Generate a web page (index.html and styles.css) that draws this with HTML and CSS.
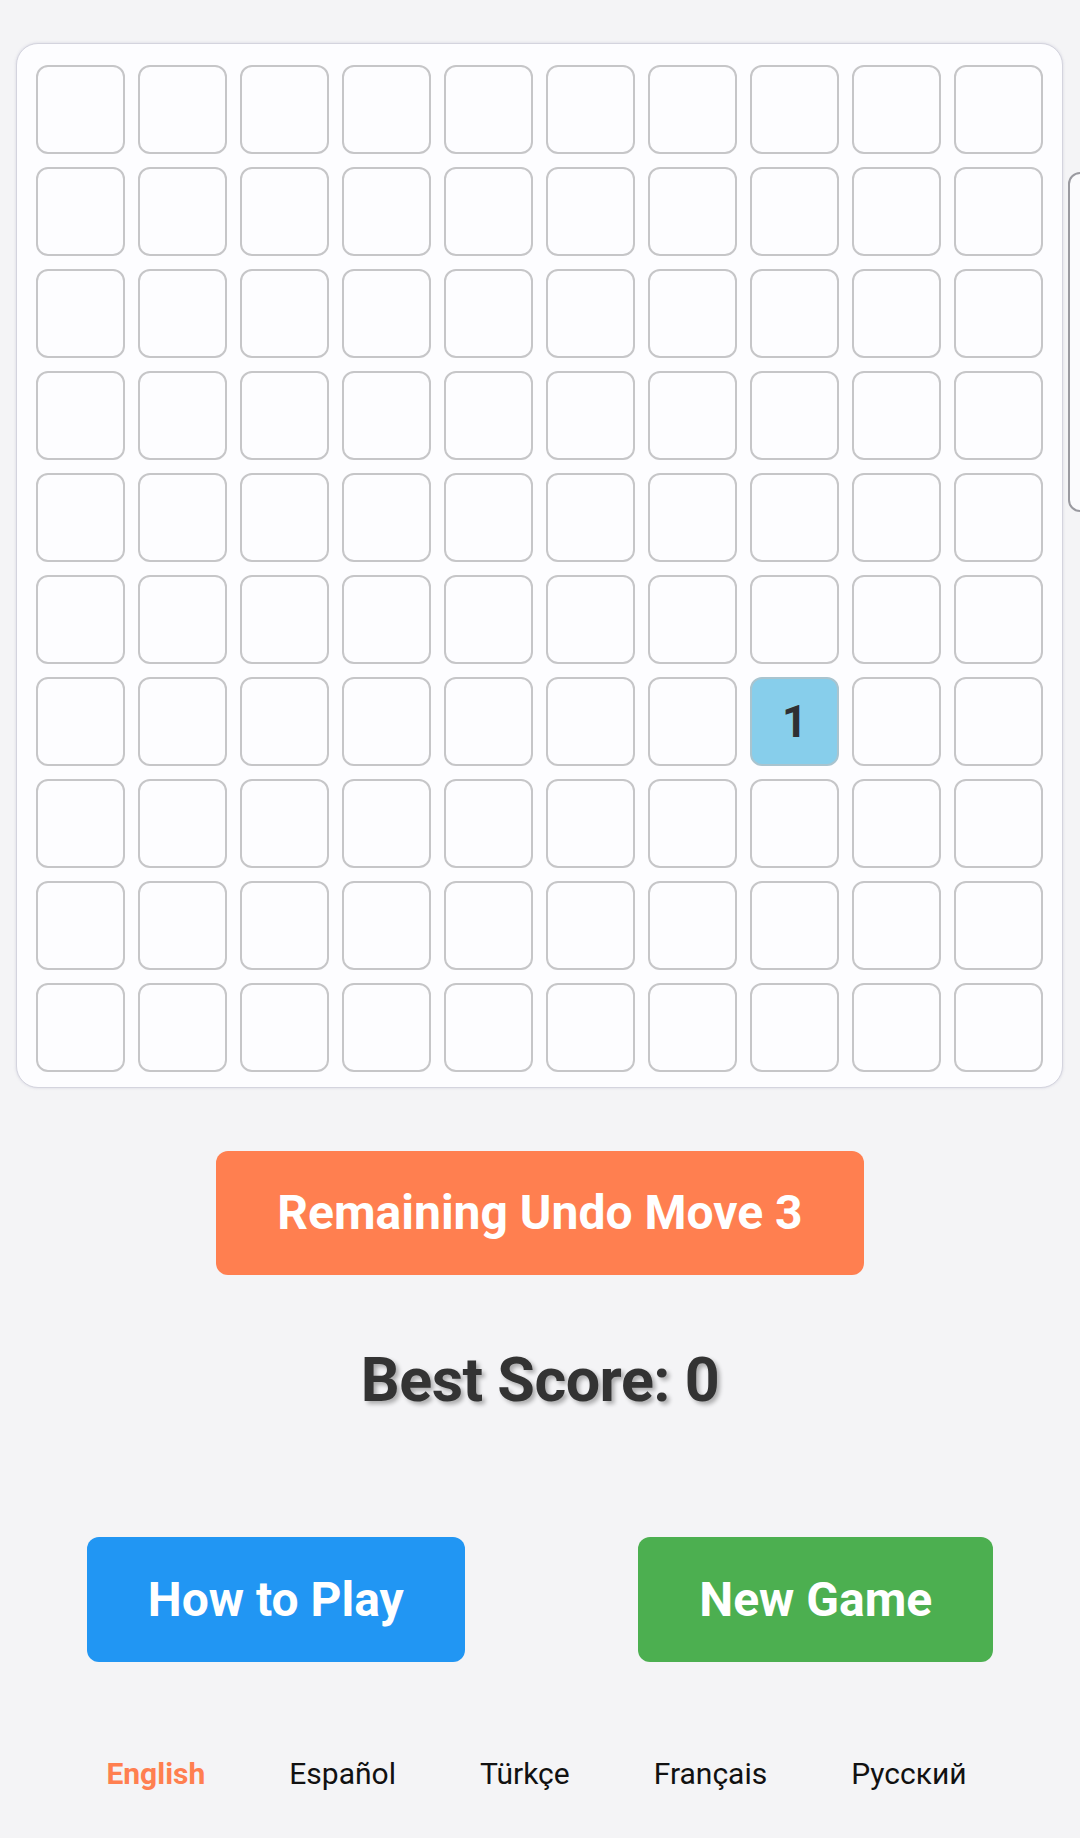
FILE: index.html
```html
<!DOCTYPE html>
<html>
<head>
<meta charset="utf-8">
<link rel="stylesheet" href="styles.css">
</head>
<body>
<div class="page">
  <div class="board" id="board"></div>
  <div class="side-panel"></div>
  <div class="undo-row"><button class="btn btn-undo">Remaining Undo Move 3</button></div>
  <div class="best">Best Score: 0</div>
  <div class="actions">
    <button class="btn btn-how">How to Play</button>
    <button class="btn btn-new">New Game</button>
  </div>
  <div class="langs">
    <span class="lang active">English</span>
    <span class="lang">Español</span>
    <span class="lang">Türkçe</span>
    <span class="lang">Français</span>
    <span class="lang">Русский</span>
  </div>
</div>
<script>
  var b = document.getElementById('board');
  for (var r = 0; r < 10; r++) {
    for (var c = 0; c < 10; c++) {
      var d = document.createElement('div');
      d.className = 'cell';
      if (r === 6 && c === 7) { d.className = 'cell tile-1'; d.textContent = '1'; }
      b.appendChild(d);
    }
  }
</script>
</body>
</html>
```
FILE: styles.css
```css
html, body {
  margin: 0;
  padding: 0;
}
body {
  background: #f4f4f6;
  font-family: Roboto, "Liberation Sans", Arial, sans-serif;
  width: 1080px;
  min-height: 1838px;
  overflow: hidden;
}
.page {
  position: relative;
  padding-top: 43px;
}
.board {
  box-sizing: border-box;
  width: 1047px;
  margin-left: 16px;
  padding: 21px 19px 15px 19px;
  border: 1px solid #d4d4de;
  border-radius: 22px;
  background: #fdfdff;
  box-shadow: 0 0 3px rgba(120, 120, 160, 0.25);
  display: grid;
  grid-template-columns: repeat(10, 89px);
  grid-auto-rows: 89px;
  gap: 13px;
}
.cell {
  box-sizing: border-box;
  border: 2px solid #c6c6c8;
  border-radius: 12px;
  background: #fdfdff;
  display: flex;
  align-items: center;
  justify-content: center;
  font-weight: 700;
  font-size: 44px;
  color: #2f2f33;
}
.tile-1 {
  background: #87ceeb;
  border-color: #a9c4cf;
}
.side-panel {
  position: absolute;
  left: 1068px;
  top: 172px;
  width: 40px;
  height: 336px;
  border: 2px solid #9a9aa0;
  border-radius: 12px;
  background: #fbfbfd;
}
.undo-row {
  display: flex;
  justify-content: center;
  margin-top: 63px;
}
.btn {
  border: none;
  border-radius: 12px;
  color: #fff;
  font-family: Roboto, "Liberation Sans", Arial, sans-serif;
  font-weight: 700;
  cursor: pointer;
}
.btn-undo {
  background: #ff7f50;
  font-size: 48px;
  line-height: 56px;
  padding: 34px 61px;
}
.best {
  margin-top: 70px;
  text-align: center;
  font-size: 61px;
  line-height: 70px;
  font-weight: 700;
  color: #333;
  text-shadow: 3px 3px 4px rgba(0, 0, 0, 0.3);
  letter-spacing: -0.5px;
}
.actions {
  display: flex;
  justify-content: space-around;
  margin-top: 122px;
}
.btn-how, .btn-new {
  font-size: 48px;
  line-height: 57px;
  padding: 34px 61px;
}
.btn-how {
  background: #2196f3;
}
.btn-new {
  background: #4caf50;
}
.langs {
  display: flex;
  justify-content: center;
  gap: 84px;
  margin-top: 95px;
  padding-right: 7px;
  font-size: 30px;
  line-height: 34px;
  color: #111;
}
.lang.active {
  color: #ff7f50;
  font-weight: 700;
}
```
